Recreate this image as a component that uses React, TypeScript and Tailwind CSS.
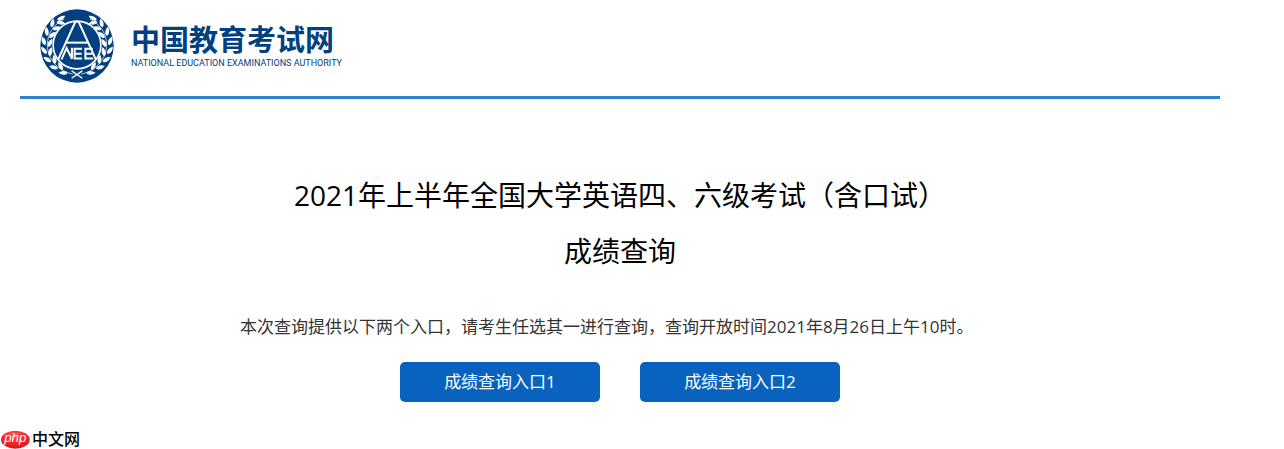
const leaves = [
  { x: 63, y: 27, r: 62 }, { x: 62, y: 41, r: 100 }, { x: 37, y: 42, r: 12 },
  { x: 50, y: 57, r: 75 }, { x: 20, y: 67, r: -8 }, { x: 37, y: 77, r: 48 },
  { x: 11, y: 95, r: -22 }, { x: 30, y: 101, r: 28 }, { x: 12, y: 123, r: -38 },
  { x: 31, y: 127, r: 12 }, { x: 22, y: 150, r: -58 }, { x: 43, y: 150, r: -8 },
  { x: 41, y: 173, r: -74 }, { x: 61, y: 170, r: -28 }, { x: 69, y: 190, r: -88 },
];

function Branch() {
  return (
    <g>
      <path d="M98 194C50 182 22 147 22 107C22 73 40 46 72 30" fill="none" stroke="#fff" strokeWidth="2" />
      {leaves.map((leaf) => (
        <path
          key={`${leaf.x}-${leaf.y}`}
          d="M0 -14Q9 -2 4 9Q0 16 -4 9Q-9 -2 0 -14Z"
          fill="#fff"
          transform={`translate(${leaf.x} ${leaf.y}) rotate(${leaf.r})`}
        />
      ))}
    </g>
  );
}

function Emblem() {
  return (
    <svg viewBox="0 0 220 220" className="size-[74px] shrink-0" aria-hidden="true">
      <circle cx="110" cy="110" r="109" fill="#02407f" />
      <Branch />
      <g transform="translate(220 0) scale(-1 1)">
        <Branch />
      </g>
      <circle cx="110" cy="107" r="71" fill="#02407f" stroke="#fff" strokeWidth="5" />
      <g fill="none" stroke="#fff" strokeWidth="6">
        <path d="M54 150L105 38H115L166 150" />
        <path d="M76 100H144" />
        <path d="M64 150L79 116L95 148V115" />
        <path d="M125 118H103V147H125M103 133H124" />
        <path d="M157 118H135V147H158M135 133H156" />
      </g>
      <path d="M94 184L126 206M126 184L94 206" stroke="#fff" strokeWidth="4" />
    </svg>
  );
}

function SiteHeader() {
  return (
    <header className="border-b-3 border-[#2f82cd] px-5 pt-[9px] pb-[13px]">
      <a href="#home" className="flex w-fit items-center gap-[17px] text-[#02407f]">
        <Emblem />
        <span className="flex flex-col">
          <span className="text-[29px] leading-[34px] font-bold">中国教育考试网</span>
          <span className="font-['Roboto',sans-serif] text-[9px] leading-3">
            NATIONAL EDUCATION EXAMINATIONS AUTHORITY
          </span>
        </span>
      </a>
    </header>
  );
}

function EntryButton({ label }: { label: string }) {
  return (
    <button type="button" className="h-10 w-[200px] cursor-pointer rounded-[5px] bg-[#0962bd] text-[17px] text-white">
      {label}
    </button>
  );
}

function PhpMark() {
  return (
    <a href="#php" className="flex w-fit items-center gap-[2px] text-black">
      <svg viewBox="0 0 90 57" className="h-[19px] w-[30px]" aria-hidden="true">
        <defs>
          <radialGradient id="php-red" cx="45%" cy="25%" r="75%">
            <stop offset="0" stopColor="#ff5a50" />
            <stop offset="0.5" stopColor="#f5282a" />
            <stop offset="1" stopColor="#e01519" />
          </radialGradient>
        </defs>
        <ellipse cx="46" cy="29" rx="43" ry="27" fill="url(#php-red)" />
        <text
          x="46"
          y="37"
          textAnchor="middle"
          fill="#fff"
          className="font-['Liberation_Sans',sans-serif] text-[40px] font-normal italic"
        >
          php
        </text>
      </svg>
      <span className="text-[16px] leading-5 font-medium">中文网</span>
    </a>
  );
}

export default function App() {
  return (
    <div className="bg-white font-['Open_Sans','Noto_Sans_CJK_SC',sans-serif]" lang="zh-CN">
      <div className="mr-5 ml-5 max-w-[1200px]">
        <SiteHeader />
        <main className="mx-auto flex max-w-[760px] flex-col pt-[68px]">
          <h1 className="text-center text-[28px] leading-14 text-black">
            2021年上半年全国大学英语四、六级考试（含口试）
            <br />
            成绩查询
          </h1>
          <p className="pt-[31px] text-[17px] leading-[34px] text-[#333]">
            本次查询提供以下两个入口，请考生任选其一进行查询，查询开放时间2021年8月26日上午10时。
          </p>
          <div className="flex flex-wrap justify-center gap-10 pt-[18px]">
            <EntryButton label="成绩查询入口1" />
            <EntryButton label="成绩查询入口2" />
          </div>
        </main>
      </div>
      <footer className="pt-[27px]">
        <PhpMark />
      </footer>
    </div>
  );
}
